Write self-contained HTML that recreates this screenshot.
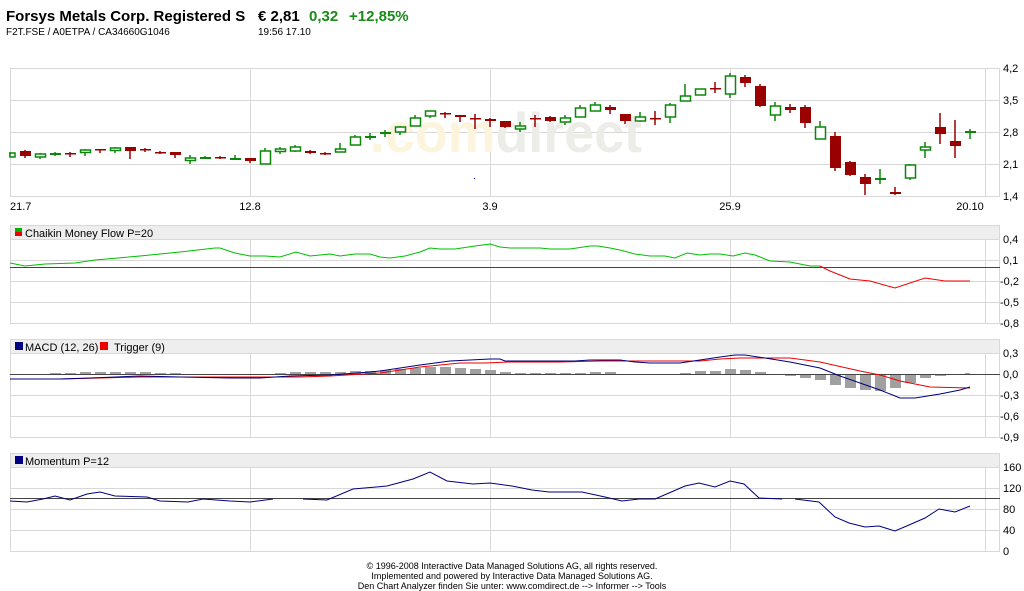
<!DOCTYPE html>
<html><head><meta charset="utf-8"><style>
html,body{margin:0;padding:0;background:#fff;width:1024px;height:591px;overflow:hidden;font-family:"Liberation Sans",sans-serif}
</style></head><body>
<svg width="1024" height="591" viewBox="0 0 1024 591" xmlns="http://www.w3.org/2000/svg" font-family="Liberation Sans, sans-serif">
<text x="6" y="21" font-size="15" font-weight="bold" fill="#000">Forsys Metals Corp. Registered S</text>
<text x="258" y="21" font-size="15" font-weight="bold" fill="#000">€ 2,81</text>
<text x="309" y="21" font-size="15" font-weight="bold" fill="#1a8a1a">0,32</text>
<text x="349" y="21" font-size="15" font-weight="bold" fill="#1a8a1a">+12,85%</text>
<text x="6" y="35" font-size="10" fill="#000">F2T.FSE / A0ETPA / CA34660G1046</text>
<text x="258" y="35" font-size="10" fill="#000">19:56   17.10</text>

<g stroke="#d8d8d8" stroke-width="1" fill="none">
<rect x="10.5" y="68.5" width="989" height="128"/>
<line x1="10" y1="100.5" x2="1000" y2="100.5"/><line x1="10" y1="132.5" x2="1000" y2="132.5"/><line x1="10" y1="164.5" x2="1000" y2="164.5"/>
<line x1="250.5" y1="68" x2="250.5" y2="196"/><line x1="490.5" y1="68" x2="490.5" y2="196"/><line x1="730.5" y1="68" x2="730.5" y2="196"/><line x1="985.5" y1="68" x2="985.5" y2="196"/>
</g>
<text x="370" y="152" font-size="56" font-weight="bold" fill="#fdf4de" textLength="272" lengthAdjust="spacingAndGlyphs">.com<tspan fill="#ecece8">direct</tspan></text>
<rect x="474" y="178" width="1" height="1" fill="#0000cc"/>
<g font-size="11" fill="#000" dominant-baseline="middle">
<text x="1003" y="69">4,2</text><text x="1003" y="101">3,5</text><text x="1003" y="133">2,8</text><text x="1003" y="165">2,1</text><text x="1003" y="197">1,4</text>
</g>
<g font-size="11" fill="#000">
<text x="10" y="210">21.7</text><text x="250" y="210" text-anchor="middle">12.8</text><text x="490" y="210" text-anchor="middle">3.9</text><text x="730" y="210" text-anchor="middle">25.9</text><text x="970" y="210" text-anchor="middle">20.10</text>
</g>
<g stroke-width="1.5">
<g stroke="#0a870a">
<path d="M10 152v5M40 153v6M55 152v4M85 149v7M115 147v6M190 155v9M205 156v3M235 155v5M265 148v16M280 147v7M295 145v7M340 143v9M355 135v10M370 133v7M385 130v7M400 126v9M415 115v11M430 111v7M520 122v10M565 115v10M580 105v12M595 102v9M640 112v10M670 103v20M685 84v17M700 89v6M730 73v25M775 102v19M820 121v18M880 169v15M910 164v16M925 142v16M970 129v10"/>
</g>
<g stroke="#990000">
<path d="M25 150v8M70 152v5M100 150v3M130 147v12M145 148v4M160 151v3M175 152v6M220 156v3M250 158v5M310 150v4M325 152v3M445 112v6M460 115v7M475 114v15M490 118v9M505 121v7M535 115v12M550 116v6M610 105v9M625 114v10M655 111v14M715 82v11M745 75v12M760 84v23M790 104v9M805 105v23M835 132v39M850 161v15M865 174v21M895 187v8M940 113v31M955 120v38"/>
</g>
</g>
<g fill="#fff" stroke="#0a870a" stroke-width="1.5">
<rect x="10" y="153" width="5" height="4"/>
<rect x="35.5" y="154" width="10" height="3"/>
<rect x="80.5" y="150" width="10" height="2.5"/>
<rect x="110.5" y="148" width="10" height="2.5"/>
<rect x="185.5" y="158" width="10" height="2.5"/>
<rect x="260.5" y="151" width="10" height="13"/>
<rect x="275.5" y="149" width="10" height="2.5"/>
<rect x="290.5" y="147" width="10" height="4"/>
<rect x="335.5" y="149" width="10" height="3"/>
<rect x="350.5" y="137" width="10" height="8"/>
<rect x="395.5" y="127" width="10" height="5"/>
<rect x="410.5" y="118" width="10" height="8"/>
<rect x="425.5" y="111" width="10" height="5"/>
<rect x="515.5" y="126" width="10" height="3"/>
<rect x="560.5" y="118" width="10" height="4"/>
<rect x="575.5" y="108" width="10" height="9"/>
<rect x="590.5" y="105" width="10" height="6"/>
<rect x="635.5" y="117" width="10" height="4"/>
<rect x="665.5" y="105" width="10" height="12"/>
<rect x="680.5" y="96" width="10" height="5"/>
<rect x="695.5" y="89" width="10" height="6"/>
<rect x="725.5" y="76" width="10" height="18"/>
<rect x="770.5" y="106" width="10" height="9"/>
<rect x="815.5" y="127" width="10" height="12"/>
<rect x="905.5" y="165" width="10" height="13"/>
<rect x="920.5" y="147" width="10" height="3"/>
</g>
<g fill="#0a870a">
<rect x="50" y="153" width="11" height="2"/><rect x="200" y="157" width="11" height="2"/><rect x="230" y="158" width="11" height="2"/>
<rect x="365" y="136" width="11" height="2"/><rect x="380" y="132" width="11" height="2"/><rect x="875" y="178" width="11" height="2"/><rect x="965" y="131" width="11" height="2"/>
</g>
<g fill="#990000">
<rect x="20" y="151" width="11" height="5"/><rect x="65" y="153" width="11" height="1.5"/><rect x="95" y="149" width="11" height="1.5"/>
<rect x="125" y="147" width="11" height="4"/><rect x="140" y="149" width="11" height="1.5"/><rect x="155" y="152" width="11" height="1.5"/>
<rect x="170" y="152" width="11" height="3"/><rect x="215" y="157" width="11" height="1.5"/><rect x="245" y="158" width="11" height="3"/>
<rect x="305" y="151" width="11" height="2"/><rect x="320" y="153" width="11" height="1.5"/><rect x="440" y="113" width="11" height="1.5"/>
<rect x="455" y="115" width="11" height="2"/><rect x="470" y="118" width="11" height="1.5"/><rect x="485" y="119" width="11" height="2"/>
<rect x="500" y="121" width="11" height="6"/><rect x="530" y="118" width="11" height="1.5"/><rect x="545" y="117" width="11" height="4"/>
<rect x="605" y="107" width="11" height="3"/><rect x="620" y="114" width="11" height="7"/><rect x="650" y="118" width="11" height="1.5"/>
<rect x="710" y="88" width="11" height="1.5"/><rect x="740" y="77" width="11" height="6"/><rect x="755" y="86" width="11" height="20"/>
<rect x="785" y="107" width="11" height="3"/><rect x="800" y="107" width="11" height="16"/><rect x="830" y="136" width="11" height="32"/>
<rect x="845" y="162" width="11" height="13"/><rect x="860" y="177" width="11" height="7"/><rect x="890" y="192" width="11" height="2"/>
<rect x="935" y="127" width="11" height="7"/><rect x="950" y="141" width="11" height="5"/>
</g>

<rect x="10.5" y="225.5" width="989" height="14" fill="#eeeeee" stroke="#d8d8d8"/>
<g stroke="#d8d8d8" fill="none">
<rect x="10.5" y="239.5" width="989" height="84"/>
<line x1="10" y1="260.5" x2="1000" y2="260.5"/><line x1="10" y1="281.5" x2="1000" y2="281.5"/><line x1="10" y1="302.5" x2="1000" y2="302.5"/>
<line x1="250.5" y1="239" x2="250.5" y2="323"/><line x1="490.5" y1="239" x2="490.5" y2="323"/><line x1="730.5" y1="239" x2="730.5" y2="323"/><line x1="985.5" y1="239" x2="985.5" y2="323"/>
</g>
<line x1="10" y1="267.5" x2="1000" y2="267.5" stroke="#444"/>
<rect x="15" y="228" width="7" height="4" fill="#00b000"/><rect x="15" y="232" width="7" height="4" fill="#ee0000"/>
<text x="25" y="237" font-size="11" fill="#000">Chaikin Money Flow P=20</text>
<polyline fill="none" stroke="#00c000" stroke-width="1" points="10,263 25,266 45,264 75,263 95,260 140,256 160,254 180,252 215,248 220,248 235,253 250,256 265,256 280,257 296,252 310,256 320,255 330,254 340,256 355,254 370,254 380,257 390,258 405,256 420,252 430,248 440,249 455,249 475,246 490,244 500,247 510,248 540,248 550,249 570,249 590,246 598,246 610,248 620,250 635,254 650,256 665,256 675,258 687,253 700,255 710,254 720,254 733,256 745,253 755,255 770,261 790,262 810,266 820,266"/>
<polyline fill="none" stroke="#ee0000" stroke-width="1" points="820,266 830,271 850,279 870,281 895,288 925,278 945,281 970,281"/>
<g font-size="11" fill="#000" dominant-baseline="middle">
<text x="1003" y="240">0,4</text><text x="1003" y="261">0,1</text><text x="1000" y="282">-0,2</text><text x="1000" y="303">-0,5</text><text x="1000" y="324">-0,8</text>
</g>

<rect x="10.5" y="339.5" width="989" height="14" fill="#eeeeee" stroke="#d8d8d8"/>
<g stroke="#d8d8d8" fill="none">
<rect x="10.5" y="353.5" width="989" height="84"/>
<line x1="10" y1="395.5" x2="1000" y2="395.5"/><line x1="10" y1="416.5" x2="1000" y2="416.5"/>
<line x1="250.5" y1="353" x2="250.5" y2="437"/><line x1="490.5" y1="353" x2="490.5" y2="437"/><line x1="730.5" y1="353" x2="730.5" y2="437"/><line x1="985.5" y1="353" x2="985.5" y2="437"/>
</g>
<g fill="#a0a0a0">
<rect x="50" y="373" width="11" height="1"/><rect x="65" y="373" width="11" height="1"/><rect x="80" y="372" width="11" height="2"/><rect x="95" y="372" width="11" height="2"/><rect x="110" y="372" width="11" height="2"/><rect x="125" y="372" width="11" height="2"/><rect x="140" y="372" width="11" height="2"/><rect x="155" y="373" width="11" height="1"/><rect x="170" y="373" width="11" height="1"/>
<rect x="275" y="373" width="11" height="1"/><rect x="290" y="372" width="11" height="2"/><rect x="305" y="372" width="11" height="2"/><rect x="320" y="372" width="11" height="2"/><rect x="335" y="372" width="11" height="2"/><rect x="350" y="371" width="11" height="3"/><rect x="365" y="371" width="11" height="3"/>
<rect x="380" y="370" width="11" height="4"/><rect x="395" y="369" width="11" height="5"/><rect x="410" y="368" width="11" height="6"/><rect x="425" y="367" width="11" height="7"/><rect x="440" y="367" width="11" height="7"/><rect x="455" y="368" width="11" height="6"/><rect x="470" y="369" width="11" height="5"/><rect x="485" y="370" width="11" height="4"/><rect x="500" y="372" width="11" height="2"/><rect x="515" y="373" width="11" height="1"/><rect x="530" y="373" width="11" height="1"/><rect x="545" y="373" width="11" height="1"/><rect x="560" y="373" width="11" height="1"/><rect x="575" y="373" width="11" height="1"/><rect x="590" y="372" width="11" height="2"/><rect x="605" y="372" width="11" height="2"/>
<rect x="680" y="373" width="11" height="1"/><rect x="695" y="371" width="11" height="3"/><rect x="710" y="371" width="11" height="3"/><rect x="725" y="369" width="11" height="5"/><rect x="740" y="370" width="11" height="4"/><rect x="755" y="372" width="11" height="2"/>
<rect x="785" y="374" width="11" height="2"/><rect x="800" y="374" width="11" height="4"/><rect x="815" y="374" width="11" height="6"/><rect x="830" y="374" width="11" height="11"/><rect x="845" y="374" width="11" height="14"/><rect x="860" y="374" width="11" height="16"/><rect x="875" y="374" width="11" height="17"/><rect x="890" y="374" width="11" height="14"/><rect x="905" y="374" width="11" height="9"/><rect x="920" y="374" width="11" height="4"/><rect x="935" y="374" width="11" height="2"/><rect x="950" y="374" width="11" height="1"/><rect x="965" y="373" width="5" height="1"/>
</g>
<line x1="10" y1="374.5" x2="1000" y2="374.5" stroke="#444"/>
<polyline fill="none" stroke="#ee0000" stroke-width="1" points="10,379 60,379 100,378 140,377 180,377 230,377 300,377 330,376 380,373 420,367 460,363 485,363 510,362 560,362 600,361 700,361 720,359 740,358 790,358 820,362 860,371 880,375 900,381 930,387 970,388"/>
<polyline fill="none" stroke="#000080" stroke-width="1" points="10,379 60,379 90,378 140,376 180,377 230,378 260,378 290,376 330,375 370,372 380,371 420,365 450,361 490,359 500,359 505,361 540,361 575,361 590,360 620,360 635,362 650,363 680,363 700,360 720,357 735,355 745,355 765,358 790,362 820,368 840,376 860,383 880,390 900,398 915,398 940,394 960,390 970,387"/>
<rect x="15" y="342" width="8" height="8" fill="#000080"/>
<text x="25" y="351" font-size="11" fill="#000">MACD (12, 26)</text>
<rect x="100" y="342" width="8" height="8" fill="#ee0000"/>
<text x="114" y="351" font-size="11" fill="#000">Trigger (9)</text>
<g font-size="11" fill="#000" dominant-baseline="middle">
<text x="1003" y="354">0,3</text><text x="1003" y="375">0,0</text><text x="1000" y="396">-0,3</text><text x="1000" y="417">-0,6</text><text x="1000" y="438">-0,9</text>
</g>

<rect x="10.5" y="453.5" width="989" height="14" fill="#eeeeee" stroke="#d8d8d8"/>
<g stroke="#d8d8d8" fill="none">
<rect x="10.5" y="467.5" width="989" height="84"/>
<line x1="10" y1="488.5" x2="1000" y2="488.5"/><line x1="10" y1="509.5" x2="1000" y2="509.5"/><line x1="10" y1="530.5" x2="1000" y2="530.5"/>
<line x1="250.5" y1="467" x2="250.5" y2="552"/><line x1="490.5" y1="467" x2="490.5" y2="552"/><line x1="730.5" y1="467" x2="730.5" y2="552"/><line x1="985.5" y1="467" x2="985.5" y2="552"/>
</g>
<line x1="10" y1="498.5" x2="1000" y2="498.5" stroke="#444"/>
<rect x="15" y="456" width="8" height="8" fill="#000080"/>
<text x="25" y="465" font-size="11" fill="#000">Momentum P=12</text>
<polyline fill="none" stroke="#000080" stroke-width="1" points="10,501 27,502 43,499 55,496 70,500 87,494 100,492 115,496 147,497 160,501 188,502 203,499 230,501 250,502 273,499"/>
<polyline fill="none" stroke="#000080" stroke-width="1" points="303,499 327,500 353,489 387,486 413,479 430,472 447,481 473,484 490,483 512,486 532,490 549,492 582,492 605,497 622,501 639,499 655,499 669,493 685,486 699,483 715,487 730,481 744,484 759,498 782,499"/>
<polyline fill="none" stroke="#000080" stroke-width="1" points="795,499 819,502 835,517 849,523 865,527 879,526 895,531 909,525 925,518 939,509 955,512 970,506"/>
<g font-size="11" fill="#000" dominant-baseline="middle">
<text x="1003" y="468">160</text><text x="1003" y="489">120</text><text x="1003" y="510">80</text><text x="1003" y="531">40</text><text x="1003" y="552">0</text>
</g>

<g font-size="9" fill="#000" text-anchor="middle">
<text x="512" y="569">© 1996-2008 Interactive Data Managed Solutions AG, all rights reserved.</text>
<text x="512" y="579">Implemented and powered by  Interactive Data Managed Solutions AG.</text>
<text x="512" y="589">Den Chart Analyzer finden Sie unter: www.comdirect.de --&gt; Informer --&gt; Tools</text>
</g>
</svg>
</body></html>
